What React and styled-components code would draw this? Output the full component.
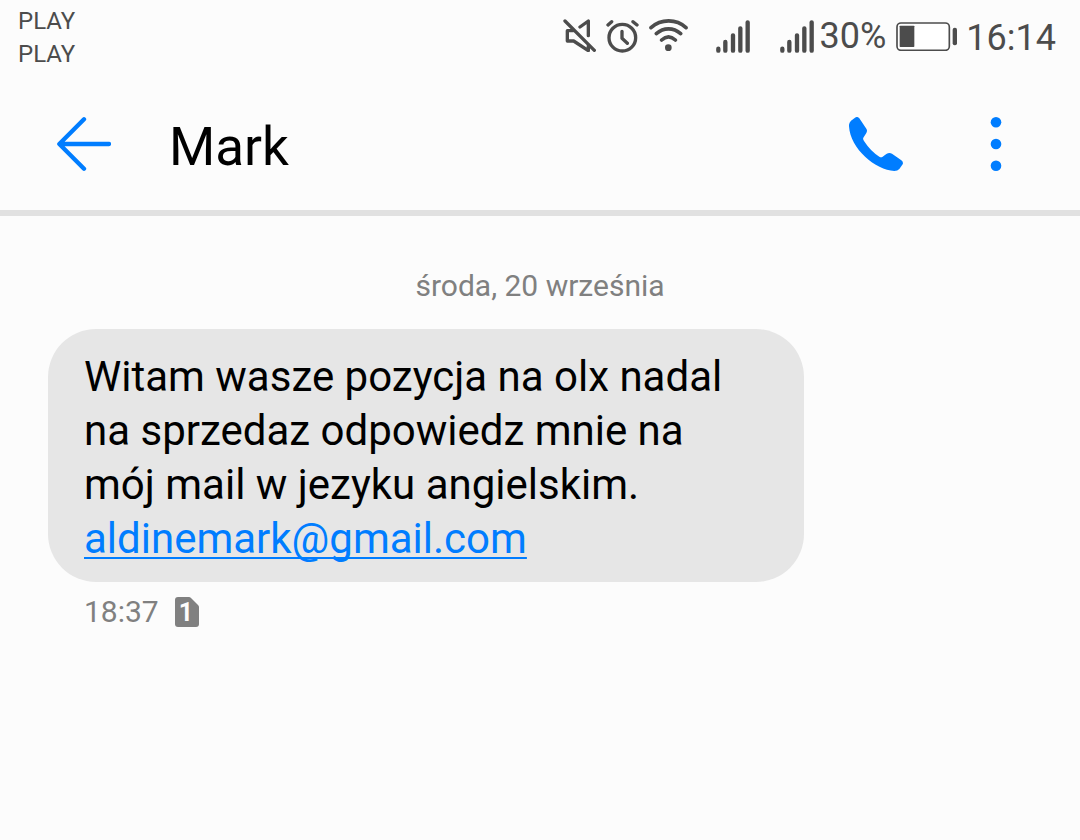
import React from 'react'
import { styled, createGlobalStyle } from 'styled-components'

const carriers = ['PLAY', 'PLAY']

const messages = [
  {
    id: 1,
    text: 'Witam wasze pozycja na olx nadal na sprzedaz odpowiedz mnie na mój mail w jezyku angielskim.',
    email: 'aldinemark@gmail.com',
    time: '18:37',
    sim: 1
  }
]

const MutedIcon = () => (
  <Icon width="33" height="33" viewBox="0 0 99 99" strokeWidth="10" aria-hidden="true">
    <path d="M6 6L94 94" />
    <path d="M51 24L76 6V50M30 35H13V66H32L76 95V80" />
  </Icon>
)

const AlarmIcon = () => (
  <Icon width="33" height="34" viewBox="0 0 99 102" strokeWidth="10" aria-hidden="true">
    <circle cx="49" cy="56" r="40" />
    <path d="M6 18L17 8M81 8L93 18M48 37V58L64 73" />
  </Icon>
)

const WifiIcon = () => (
  <Icon width="39" height="33" viewBox="0 0 117 99" strokeWidth="11" aria-hidden="true">
    <path d="M6 26C36 -1 82 -1 111 26M22 44C44 25 73 25 95 44M38 63C51 51 66 51 79 63" />
    <circle cx="58" cy="86" r="10" fill="currentColor" stroke="none" />
  </Icon>
)

const SignalIcon = () => (
  <Icon width="34" height="33" viewBox="0 0 102 99" strokeWidth="13" aria-hidden="true">
    <path d="M7 86V92M28 66V92M51 46V92M73 25V92M95 7V92" />
  </Icon>
)

const BatteryIcon = () => (
  <Icon width="61" height="29" viewBox="0 0 183 87" strokeWidth="5" aria-hidden="true">
    <rect x="3" y="3" width="157" height="82" rx="12" fill="#fff" />
    <rect x="11" y="11" width="44" height="64" rx="2" fill="currentColor" stroke="none" />
    <rect x="170" y="17" width="13" height="53" rx="6" fill="currentColor" stroke="none" />
  </Icon>
)

const BackIcon = () => (
  <Icon width="54" height="54" viewBox="0 0 162 162" strokeWidth="13" aria-hidden="true">
    <path d="M81 7L7 81L81 155M10 81H156" />
  </Icon>
)

const PhoneIcon = () => (
  <Icon width="54" height="54" viewBox="0 0 162 162" aria-hidden="true">
    <path
      fill="currentColor"
      stroke="none"
      d="M18 2Q26 -3 31 4L52 35Q56 41 52 48L43 62Q41 67 45 72Q65 103 91 119Q96 122 101 119L112 111Q121 105 129 110L157 130Q164 135 161 142L151 156Q146 162 136 162C80 160 4 96 0 28Q-1 18 6 11Z"
    />
  </Icon>
)

const MoreIcon = () => (
  <Icon width="12" height="54" viewBox="0 0 12 54" aria-hidden="true">
    <g fill="currentColor" stroke="none">
      <circle cx="6" cy="5.3" r="5.3" />
      <circle cx="6" cy="27" r="5.3" />
      <circle cx="6" cy="48.7" r="5.3" />
    </g>
  </Icon>
)

const SimIcon = ({ number }) => (
  <Icon width="24" height="30" viewBox="0 0 24 30" role="img" aria-label={`SIM ${number}`}>
    <path
      fill="currentColor"
      stroke="none"
      d="M3 0H14Q15 0 16 1L23 8Q24 9 24 10V27Q24 30 21 30H3Q0 30 0 27V3Q0 0 3 0Z"
    />
    <SimNumber x="11" y="24" textAnchor="middle">
      {number}
    </SimNumber>
  </Icon>
)

const App = () => {
  return (
    <>
      <GlobalStyle />
      <StatusBar>
        <Carriers>
          {carriers.map((carrier, index) => (
            <li key={index}>{carrier}</li>
          ))}
        </Carriers>
        <StatusIcons>
          <Indicators>
            <MutedIcon />
            <AlarmIcon />
            <WifiIcon />
          </Indicators>
          <Signals>
            <SignalIcon />
            <SignalIcon />
          </Signals>
          <BatteryLevel>30%</BatteryLevel>
          <BatteryIcon />
          <Clock>16:14</Clock>
        </StatusIcons>
      </StatusBar>
      <Header>
        <IconButton type="button" aria-label="Wstecz">
          <BackIcon />
        </IconButton>
        <ContactName>Mark</ContactName>
        <IconButton type="button" aria-label="Zadzwoń">
          <PhoneIcon />
        </IconButton>
        <IconButton type="button" aria-label="Więcej">
          <MoreIcon />
        </IconButton>
      </Header>
      <Conversation>
        <DateLabel>środa, 20 września</DateLabel>
        {messages.map((message) => (
          <Message key={message.id}>
            <Bubble>
              {message.text}{' '}
              <MailLink href={`mailto:${message.email}`}>
                {message.email}
              </MailLink>
            </Bubble>
            <MessageInfo>
              <time>{message.time}</time>
              <SimIcon number={message.sim} />
            </MessageInfo>
          </Message>
        ))}
      </Conversation>
    </>
  )
}

const GlobalStyle = createGlobalStyle`
  * {
    box-sizing: border-box;
  }

  body {
    margin: 0;
    background-color: #fcfcfc;
    color: #000;
    font-family: Roboto, 'Liberation Sans', sans-serif;
  }
`

const Icon = styled.svg`
  display: block;
  flex-shrink: 0;
  fill: none;
  stroke: currentColor;
  stroke-linecap: round;
  stroke-linejoin: round;
`

const StatusBar = styled.div`
  display: flex;
  justify-content: space-between;
  align-items: flex-start;
  padding: 4px 24px 6px 18px;
  color: #4c4c4c;
`

const Carriers = styled.ul`
  list-style: none;
  margin: 0;
  padding: 1px 0;
  font-size: 24px;
  line-height: 33px;
`

const StatusIcons = styled.div`
  display: flex;
  align-items: center;
  height: 64px;
`

const Indicators = styled.div`
  display: flex;
  gap: 10px;
  margin-right: 28px;
`

const Signals = styled.div`
  display: flex;
  gap: 30px;
  margin-right: 6px;
`

const BatteryLevel = styled.span`
  font-size: 36px;
  margin-right: 10px;
`

const Clock = styled.span`
  font-size: 36px;
  line-height: 44px;
  padding-top: 4px;
  margin-left: 9px;
`

const Header = styled.header`
  display: flex;
  align-items: center;
  padding: 0 78px 0 57px;
  height: 138px;
  border-bottom: 6px solid #e1e1e1;
`

const IconButton = styled.button`
  border: none;
  background: none;
  padding: 0;
  color: #007dff;
  cursor: pointer;

  & + & {
    margin-left: 87px;
  }
`

const ContactName = styled.h1`
  flex: 1;
  margin: 0;
  padding: 6px 0 0 58px;
  font-size: 53px;
  font-weight: 400;
  line-height: 64px;
`

const Conversation = styled.main`
  padding: 52px 48px;
`

const DateLabel = styled.p`
  margin: 0 0 25px;
  text-align: center;
  font-size: 30px;
  line-height: 36px;
  color: #808080;
`

const Message = styled.article`
  max-width: 756px;
`

const Bubble = styled.p`
  margin: 0;
  padding: 21px 72px 16px 36px;
  border-radius: 48px;
  background-color: #e6e6e6;
  font-size: 42px;
  line-height: 54px;
`

const MailLink = styled.a`
  color: #007dff;
  text-decoration: underline 2px;
  text-underline-offset: 4px;
  text-decoration-skip-ink: none;
`

const MessageInfo = styled.div`
  display: flex;
  align-items: center;
  gap: 16px;
  padding: 12px 36px;
  font-size: 30px;
  line-height: 36px;
  color: #808080;
`

const SimNumber = styled.text`
  font-size: 25px;
  font-weight: 700;
  fill: #fcfcfc;
  stroke: none;
`

export default App
